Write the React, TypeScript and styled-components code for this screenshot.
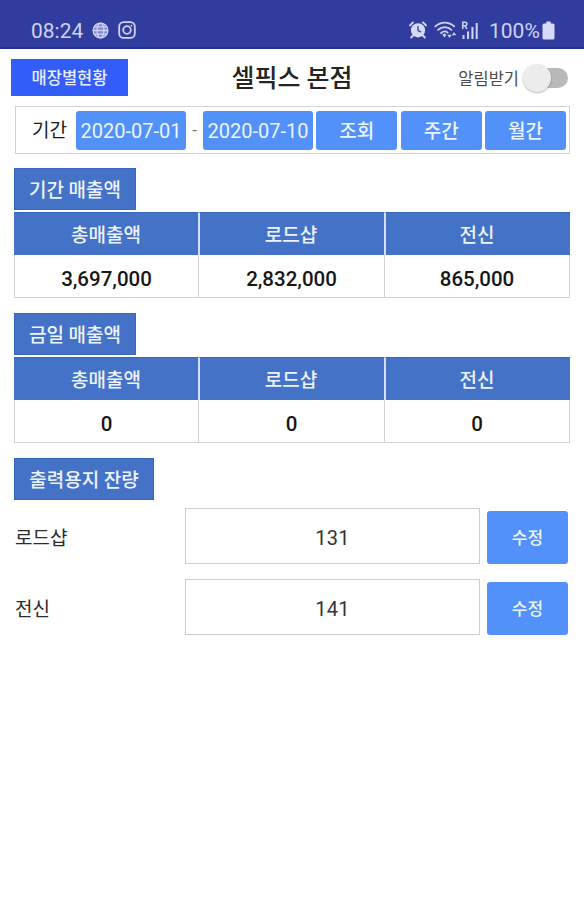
import React from 'react';
import styled, { createGlobalStyle } from 'styled-components';

const GlobalStyle = createGlobalStyle`
  * { box-sizing: border-box; }
  html, body { margin: 0; background: #fff; }
  body, button, input {
    font-family: Roboto, "Noto Sans CJK KR", sans-serif;
  }
  button { border: 0; padding: 0; margin: 0; }
`;

const Screen = styled.div`
  width: 584px;
  height: 900px;
  background: #fff;
  color: #1c1c1c;
  overflow: hidden;
`;

const StatusBar = styled.header`
  height: 49px;
  padding: 12px 29px 0 31px;
  display: flex;
  justify-content: space-between;
  background: #303d9f;
  border-bottom: 2px solid #24309a;
  color: #cfd3f3;
`;

const StatusGroup = styled.div`
  display: flex;
  align-items: center;
  height: 36px;

  svg { display: block; flex: none; }
`;

const Clock = styled.span`
  font-size: 21px;
  line-height: 36px;
  padding-top: 2px;
  width: 61px;
`;

const BatteryText = styled.span`
  font-size: 21px;
  line-height: 36px;
  padding-top: 2px;
  margin-left: 10px;
  width: 53px;
  white-space: nowrap;
`;

const TitleBar = styled.div`
  height: 57px;
  padding: 0 16px 0 11px;
  display: grid;
  grid-template-columns: 165px 1fr 165px;
  align-items: center;
`;

const StoresButton = styled.button`
  width: 117px;
  height: 37px;
  padding-top: 2px;
  background: #335df8;
  color: #e9eeff;
  font-size: 16.5px;
  font-weight: 500;
  line-height: 35px;
`;

const Title = styled.h1`
  margin: 0;
  padding: 2px 0 0 5px;
  text-align: center;
  font-size: 25px;
  line-height: 55px;
  font-weight: 500;
  color: #242424;
  white-space: nowrap;
`;

const AlertToggle = styled.div`
  display: flex;
  align-items: center;
  justify-content: flex-end;
  gap: 4px;
  font-size: 16.5px;
  color: #4c4c4c;
  white-space: nowrap;
`;

const SwitchTrack = styled.span`
  display: flex;
  align-items: center;
  width: 45px;
  height: 20px;
  background: linear-gradient(90deg, transparent 14px, #b9b9b9 14px);
  border-radius: 10px;
`;

const SwitchKnob = styled.span`
  width: 28px;
  height: 28px;
  border-radius: 50%;
  background: #ececec;
  box-shadow: 0 1px 2px rgba(0, 0, 0, 0.28);
`;

const Content = styled.main`
  padding: 0 14px;
`;

const Filter = styled.div`
  height: 48px;
  margin-left: 1px;
  padding: 0 3px 0 16px;
  display: flex;
  align-items: center;
  justify-content: space-between;
  border: 1px solid #d3d3d3;
`;

const FilterLabel = styled.span`
  width: 44px;
  padding-top: 2px;
  font-size: 19px;
  line-height: 38px;
`;

const DateRange = styled.div`
  display: flex;
  align-items: center;
`;

const Dash = styled.span`
  width: 17px;
  text-align: center;
  font-size: 17px;
  color: #777;
`;

const BlueButton = styled.button<{ $w: number; $h?: number; $size?: number; $weight?: number }>`
  flex: none;
  width: ${(p) => p.$w}px;
  height: ${(p) => p.$h ?? 39}px;
  padding-top: 2px;
  border-radius: 3px;
  background: #5290fa;
  color: #edf5ff;
  font-size: ${(p) => p.$size ?? 19}px;
  font-weight: ${(p) => p.$weight ?? 500};
  line-height: ${(p) => (p.$h ?? 39) - 2}px;
  white-space: nowrap;
`;

const Section = styled.section<{ $top: number }>`
  padding-top: ${(p) => p.$top}px;
`;

const Tag = styled.h2<{ $w: number }>`
  margin: 0;
  width: ${(p) => p.$w}px;
  height: 42px;
  padding-top: 2px;
  border: 1px solid #3468bd;
  background: #4372c7;
  color: #eef4ff;
  text-align: center;
  font-size: 19px;
  line-height: 40px;
  font-weight: 500;
`;

const Table = styled.div`
  margin-top: 2px;
  display: grid;
  grid-template-columns: 184px 186px 186px;
  width: 556px;
`;

const HeadCell = styled.div`
  height: 43px;
  line-height: 43px;
  padding-top: 1px;
  background: #4372c7;
  border-top: 1px solid #3468bd;
  color: #eef4ff;
  text-align: center;
  font-size: 19px;
  font-weight: 500;

  & + & { border-left: 2px solid #d5dff0; padding-right: 2px; }
`;

const ValueCell = styled.div`
  height: 43px;
  line-height: 48px;
  border: solid #d3d3d3;
  border-width: 0 0 1px 1px;
  text-align: center;
  font-size: 20.5px;
  font-weight: 500;
  color: #161616;

  &:last-child { border-right: 1px solid #d3d3d3; }
`;

const PaperRow = styled.div`
  height: 56px;
  margin-bottom: 15px;
  display: grid;
  grid-template-columns: 171px 295px 88px;
  align-items: center;
`;

const PaperLabel = styled.label`
  padding-left: 1px;
  font-size: 19px;
  color: #2b2b2b;
`;

const PaperInput = styled.input`
  width: 295px;
  height: 56px;
  padding: 3px 0 0;
  border: 1px solid #cdcdcd;
  border-radius: 0;
  background: #fff;
  text-align: center;
  font-size: 20px;
  letter-spacing: 0.2px;
  color: #333;
  outline: none;
`;

const EditSlot = styled.div`
  padding: 2px 0 0 7px;
  display: flex;
`;

const GlobeIcon = () => (
  <svg width="17" height="17" viewBox="0 0 17 17" fill="none" stroke="#cfd3f3" strokeWidth="1.3">
    <circle cx="8.5" cy="8.5" r="7.4" fill="#7d86cb" />
    <ellipse cx="8.5" cy="8.5" rx="3.4" ry="7.4" />
    <path d="M2.3 4.8h12.4M1 8.5h15M2.3 12.2h12.4" />
  </svg>
);

const InstagramIcon = () => (
  <svg width="18" height="18" viewBox="0 0 18 18" fill="none" stroke="#cfd3f3" strokeWidth="1.8">
    <rect x="1.2" y="1.2" width="15.6" height="15.6" rx="4.4" />
    <circle cx="9" cy="9" r="3.8" />
    <circle cx="13.4" cy="4.7" r="0.9" fill="#cfd3f3" stroke="none" />
  </svg>
);

const AlarmIcon = () => (
  <svg width="18" height="18" viewBox="0 0 18 18" fill="none" stroke="#d6daf6" strokeLinecap="round">
    <circle cx="9" cy="9.3" r="7.1" fill="#d6daf6" stroke="none" />
    <path d="M1 4.4 4 1.4M17 4.4l-3-3M4 14.5l-1.8 2M14 14.5l1.8 2" strokeWidth="1.9" />
    <path d="M9 5.4v4.2l2.6 1.2" stroke="#303d9f" strokeWidth="1.3" />
  </svg>
);

const WifiIcon = () => (
  <svg width="23" height="18" viewBox="0 0 23 18" fill="none" stroke="#cfd3f3" strokeWidth="1.8" strokeLinecap="round">
    <path d="M1.3 5.3C6.8.3 14.8.3 20.2 5.3M4 8.8c4-3.7 9.6-3.7 13.5 0M7 12.1c2.1-1.9 4.7-2.1 6.6-.5" />
    <path d="m8.2 13.8 2.5-1.3 1.6 1.3-1.6 2.6z" fill="#cfd3f3" stroke="none" />
    <path d="m13.3 13.7 2.2 3.3 2.2-3.3zM17.8 14.2l2.2-3.3 2.2 3.3z" fill="#cfd3f3" stroke="none" />
  </svg>
);

const SignalIcon = () => (
  <svg width="18" height="19" viewBox="0 0 18 19" fill="#cfd3f3">
    <path d="M1.8 8V1.2h2.4a1.7 1.7 0 0 1 0 3.5H1.8M4 4.8 6 8" fill="none" stroke="#cfd3f3" strokeWidth="1.5" />
    <rect x="1.5" y="14" width="2" height="4" />
    <rect x="6" y="10.5" width="2.1" height="7.5" />
    <rect x="10.4" y="6" width="2.1" height="12" />
    <rect x="14.7" y="2" width="2" height="16" />
  </svg>
);

const BatteryIcon = () => (
  <svg width="13" height="19" viewBox="0 0 13 19" fill="#d6daf6">
    <path d="M4.3.5h4.4v2H11a1.5 1.5 0 0 1 1.5 1.5v13a1.5 1.5 0 0 1-1.5 1.5H2A1.5 1.5 0 0 1 .5 17V4A1.5 1.5 0 0 1 2 2.5h2.3z" />
  </svg>
);

const IconSpace = styled.span<{ $w: number }>`
  width: ${(p) => p.$w}px;
`;

interface SalesProps {
  title: string;
  top: number;
  values: string[];
}

const columns = ['총매출액', '로드샵', '전신'];

const Sales = ({ title, top, values }: SalesProps) => (
  <Section $top={top}>
    <Tag $w={122}>{title}</Tag>
    <Table>
      {columns.map((c) => (
        <HeadCell key={c}>{c}</HeadCell>
      ))}
      {values.map((v, i) => (
        <ValueCell key={columns[i]}>{v}</ValueCell>
      ))}
    </Table>
  </Section>
);

const papers = [
  { name: '로드샵', count: '131' },
  { name: '전신', count: '141' },
];

export default function App() {
  return (
    <Screen>
      <GlobalStyle />
      <StatusBar>
        <StatusGroup>
          <Clock>08:24</Clock>
          <GlobeIcon />
          <IconSpace $w={9} />
          <InstagramIcon />
        </StatusGroup>
        <StatusGroup>
          <AlarmIcon />
          <IconSpace $w={7} />
          <WifiIcon />
          <IconSpace $w={4} />
          <SignalIcon />
          <BatteryText>100%</BatteryText>
          <BatteryIcon />
        </StatusGroup>
      </StatusBar>
      <TitleBar>
        <StoresButton>매장별현황</StoresButton>
        <Title>셀픽스 본점</Title>
        <AlertToggle>
          알림받기
          <SwitchTrack>
            <SwitchKnob />
          </SwitchTrack>
        </AlertToggle>
      </TitleBar>
      <Content>
        <Filter>
          <DateRange>
            <FilterLabel>기간</FilterLabel>
            <BlueButton $w={110} $size={20} $weight={400}>2020-07-01</BlueButton>
            <Dash>-</Dash>
            <BlueButton $w={110} $size={20} $weight={400}>2020-07-10</BlueButton>
          </DateRange>
          <BlueButton $w={81}>조회</BlueButton>
          <BlueButton $w={81}>주간</BlueButton>
          <BlueButton $w={81}>월간</BlueButton>
        </Filter>
        <Sales title="기간 매출액" top={14} values={['3,697,000', '2,832,000', '865,000']} />
        <Sales title="금일 매출액" top={15} values={['0', '0', '0']} />
        <Section $top={15}>
          <Tag $w={140}>출력용지 잔량</Tag>
        </Section>
        <Section $top={8}>
          {papers.map((p) => (
            <PaperRow key={p.name}>
              <PaperLabel htmlFor={p.name}>{p.name}</PaperLabel>
              <PaperInput id={p.name} defaultValue={p.count} />
              <EditSlot>
                <BlueButton $w={81} $h={53} $size={17}>수정</BlueButton>
              </EditSlot>
            </PaperRow>
          ))}
        </Section>
      </Content>
    </Screen>
  );
}
